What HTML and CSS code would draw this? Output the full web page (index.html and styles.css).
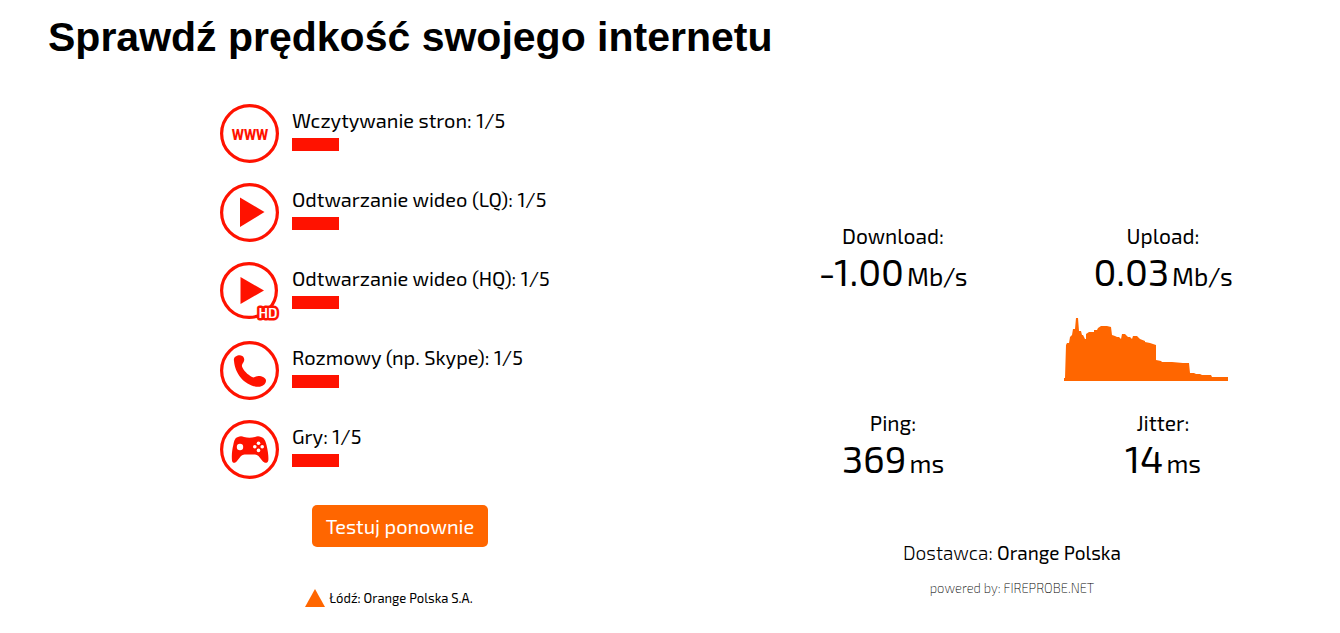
FILE: index.html
```html
<!DOCTYPE html>
<html lang="pl">
<head>
  <meta charset="UTF-8">
  <meta name="viewport" content="width=device-width, initial-scale=1.0">
  <title>Sprawdź prędkość swojego internetu</title>
  <link rel="stylesheet" href="styles.css">
</head>
<body>
  <h1>Sprawdź prędkość swojego internetu</h1>

  <main class="speedtest">
    <section class="quality">
      <ul class="quality-list">
        <li class="quality-item">
          <svg class="icon" viewBox="0 0 59 59" aria-hidden="true">
            <circle cx="29.500" cy="29.500" r="27.900" class="ring"/>
            <text x="30" y="36" class="www">WWW</text>
          </svg>
          <div class="quality-info">
            <div class="quality-name">Wczytywanie stron: 1/5</div>
            <div class="bar"></div>
          </div>
        </li>
        <li class="quality-item">
          <svg class="icon" viewBox="0 0 59 59" aria-hidden="true">
            <circle cx="29.500" cy="29.500" r="27.900" class="ring"/>
            <path class="fill" d="M20 14.500v29.500L44.500 29z"/>
          </svg>
          <div class="quality-info">
            <div class="quality-name">Odtwarzanie wideo (LQ): 1/5</div>
            <div class="bar"></div>
          </div>
        </li>
        <li class="quality-item">
          <svg class="icon" viewBox="0 0 59 59" aria-hidden="true">
            <ellipse cx="29" cy="28.500" rx="27.400" ry="26.900" class="ring"/>
            <path class="fill" d="M20.500 15v27L44 28.500z"/>
            <text x="48" y="56" class="hd">HD</text>
          </svg>
          <div class="quality-info">
            <div class="quality-name">Odtwarzanie wideo (HQ): 1/5</div>
            <div class="bar"></div>
          </div>
        </li>
        <li class="quality-item">
          <svg class="icon" viewBox="0 0 59 59" aria-hidden="true">
            <circle cx="29.500" cy="29.500" r="27.900" class="ring"/>
            <path class="fill" d="M14 20C13 16 17 14 20 14.200C23 14.500 25 17 24 20C23.500 22 21.500 23 22 25.500C23.500 29.500 27.500 33.500 32 36C34.500 37.500 35.500 35 38.500 35C42 35 46 37 46 39.500C46 43.500 42 46 38 45.800C25 45 15 33 14 20z"/>
          </svg>
          <div class="quality-info">
            <div class="quality-name">Rozmowy (np. Skype): 1/5</div>
            <div class="bar"></div>
          </div>
        </li>
        <li class="quality-item">
          <svg class="icon" viewBox="0 0 59 59" aria-hidden="true">
            <circle cx="29.500" cy="29.500" r="27.900" class="ring"/>
            <path class="fill" d="M18 17Q21 15.500 24 17Q29.500 18.500 35 17Q38 15.500 41 17C44.500 18 45.500 21 46.500 25C48 31 48.700 37 48.300 40.500C47.800 43.500 44.500 43.500 42.500 41L38.500 36Q37 34.500 35 34.500H24.500Q22.500 34.500 21 36L17 41C15.500 43.500 12.200 43.500 12 40.500C11.500 36 12 30 13.300 25C14.200 21 14.500 18 18 17z"/>
            <g fill="#fff">
              <circle cx="20" cy="27" r="3.200"/>
              <circle cx="38.500" cy="23.200" r="1.800"/>
              <circle cx="38.500" cy="30.400" r="1.800"/>
              <circle cx="34.800" cy="26.800" r="1.800"/>
              <circle cx="42.200" cy="26.800" r="1.800"/>
            </g>
          </svg>
          <div class="quality-info">
            <div class="quality-name">Gry: 1/5</div>
            <div class="bar"></div>
          </div>
        </li>
      </ul>

      <button type="button" class="retry">Testuj ponownie</button>

      <div class="server">
        <svg class="marker" viewBox="0 0 20 18" aria-hidden="true"><path d="M10 0l10 18H0z"/></svg>
        <span>Łódź: Orange Polska S.A.</span>
      </div>
    </section>

    <section class="results">
      <div class="result-grid">
        <div class="result">
          <div class="result-name">Download:</div>
          <div class="result-value">-1.00<span class="unit">Mb/s</span></div>
        </div>
        <div class="result">
          <div class="result-name">Upload:</div>
          <div class="result-value">0.03<span class="unit">Mb/s</span></div>
          <div class="chart">
            <svg width="164" height="64" viewBox="0 0 164 64" aria-hidden="true">
              <path d="M0 64V61H1L2 28 3 26H5L6 20 8 18 9 12H11L12 1H14L15 14H17L18 18H19L20 20 21 22H22V17L25 15H30V13H33L34 11 37 9H43L47 10 48 18 51 19 53 20H55L57 22 58 17H61L64 20H66L68 22 69 19H73L76 22 81 24V25L86 26 92 28V43L97 44 98 45H108L119 46H125L126 56H130L132 57H136L138 58H147L148 60H164V64z"/>
            </svg>
          </div>
        </div>
        <div class="result">
          <div class="result-name">Ping:</div>
          <div class="result-value">369<span class="unit">ms</span></div>
        </div>
        <div class="result">
          <div class="result-name">Jitter:</div>
          <div class="result-value">14<span class="unit">ms</span></div>
        </div>
      </div>

      <div class="provider">Dostawca: <span class="provider-name">Orange Polska</span></div>
      <div class="powered">powered by: FIREPROBE.NET</div>
    </section>
  </main>
</body>
</html>
```
FILE: styles.css
```css
* {
  margin: 0;
  padding: 0;
  box-sizing: border-box;
}
body {
  background: #fff;
  color: #000;
  font-family: "Exo 2", Roboto, "Noto Sans", sans-serif;
  font-size: 20px;
}
h1 {
  padding: 13px 48px 0;
  font-family: Arial, "Liberation Sans", sans-serif;
  font-size: 41px;
  line-height: 48px;
}
.speedtest {
  display: grid;
  grid-template-columns: 1fr 1fr;
  gap: 88px;
  padding: 43px 42px 0 130px;
}
.quality {
  display: flex;
  flex-direction: column;
  align-items: center;
}
.quality-list {
  display: grid;
  gap: 20px;
  width: 100%;
  max-width: 360px;
  list-style: none;
}
.quality-item {
  display: flex;
  gap: 13px;
}
.icon {
  flex: none;
  width: 59px;
  height: 59px;
  overflow: visible;
}
.ring {
  fill: none;
  stroke: #ff1200;
  stroke-width: 3.2;
}
.fill {
  fill: #ff1200;
}
.www {
  fill: #ff1200;
  font-family: Roboto, sans-serif;
  font-size: 14px;
  font-weight: 800;
  text-anchor: middle;
}
.hd {
  fill: #fff;
  stroke: #ff1200;
  stroke-width: 5;
  stroke-linejoin: round;
  paint-order: stroke;
  font-size: 14px;
  font-weight: 600;
  text-anchor: middle;
}
.quality-name {
  padding-top: 3px;
  line-height: 26px;
}
.bar {
  width: 47px;
  height: 13px;
  margin-top: 5px;
  background: #ff1200;
}
.retry {
  margin-top: 26px;
  padding: 8px 14px;
  border: none;
  border-radius: 5px;
  background: #ff6600;
  color: #fff;
  font: inherit;
  line-height: 26px;
  cursor: pointer;
}
.server {
  display: flex;
  align-items: center;
  gap: 4px;
  margin-top: 42px;
  padding-right: 22px;
  font-size: 13px;
  line-height: 18px;
}
.marker {
  width: 20px;
  height: 18px;
  fill: #ff6600;
}
.results {
  padding-top: 119px;
  text-align: center;
}
.result-grid {
  display: grid;
  grid-template-columns: 1fr 1fr;
  row-gap: 29px;
}
.result-name {
  font-size: 21px;
  line-height: 26px;
}
.result-value {
  font-size: 38px;
  line-height: 44px;
}
.unit {
  margin-left: 3px;
  font-size: 25px;
  line-height: 26px;
}
.chart {
  margin-top: 24px;
  padding-right: 34px;
}
.chart svg {
  display: block;
  margin: 0 auto;
  fill: #ff6600;
}
.provider {
  margin-top: 60px;
  padding-right: 32px;
  font-size: 19px;
  font-weight: 300;
  line-height: 26px;
}
.provider-name {
  font-weight: 400;
}
.powered {
  margin-top: 12px;
  padding-right: 32px;
  font-size: 13px;
  font-weight: 200;
  line-height: 20px;
}
```
